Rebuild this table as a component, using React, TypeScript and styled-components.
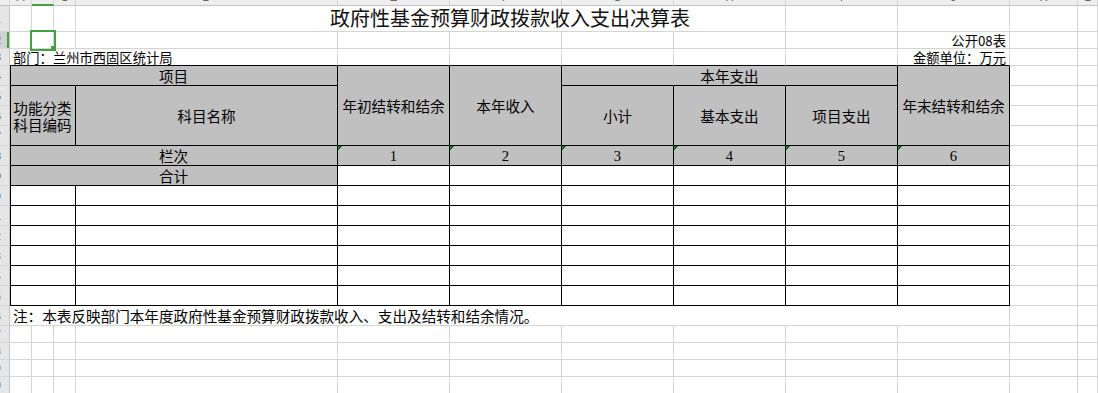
import React from 'react'
import styled, { createGlobalStyle, css } from 'styled-components'

const GRID = '#d4d4d4'
const INK = '#000'
const HEAD = '#c0c0c0'
const PICK = '#43a143'

const GlobalStyle = createGlobalStyle`
    html, body {
        margin: 0;
        padding: 0;
        background: #fff;
        overflow: hidden;
    }
`

type Place = { $c: number; $r: number; $cs?: number; $rs?: number }

const place = css<Place>`
    grid-column: ${p => p.$c} / span ${p => p.$cs ?? 1};
    grid-row: ${p => p.$r} / span ${p => p.$rs ?? 1};
    box-sizing: border-box;
    min-width: 0;
`

const Sheet = styled.div`
    display: grid;
    grid-template-columns: 10px 22px 22px 22px 262px repeat(6, 112px) 68px 1fr;
    grid-template-rows: 6px 26px 17px 17px repeat(13, 20px) repeat(4, 17px);
    width: 1098px;
    height: 393px;
    overflow: hidden;
    font-family: "Noto Sans CJK SC", "Noto Sans", sans-serif;
    color: #000;
`

// column letters sit mostly above the window edge, only their feet show
const ColHead = styled.div<Place & { $on?: boolean }>`
    ${place}
    display: flex;
    justify-content: center;
    align-items: flex-end;
    overflow: hidden;
    background: #eeeeee;
    border-right: 1px solid #d6d6d6;
    border-bottom: ${p => (p.$on ? `2px solid ${PICK}` : '1px solid #c4c4c4')};
    font-family: "Liberation Sans", sans-serif;
    font-size: 12px;
    line-height: 12px;
    color: #666;
`

const Letter = styled.span`
    display: block;
    transform: translateY(-2px);
`

const RowHead = styled.div<Place & { $on?: boolean }>`
    ${place}
    display: flex;
    justify-content: flex-end;
    align-items: center;
    overflow: hidden;
    padding-right: 8px;
    background: ${p => (p.$on ? '#d2d2d2' : '#e6e6e6')};
    border-right: 1px solid #c4c4c4;
    border-bottom: 1px solid #d6d6d6;
    box-shadow: ${p => (p.$on ? `inset -2px 0 0 ${PICK}` : 'none')};
    font-family: "Liberation Sans", sans-serif;
    font-size: 11px;
    color: #666;
    white-space: nowrap;
`

const GridCell = styled.div<Place & { $under?: boolean }>`
    ${place}
    border-right: 1px solid ${GRID};
    border-bottom: 1px solid ${p => (p.$under ? INK : GRID)};
`

const Picked = styled(GridCell)`
    position: relative;
    outline: 2px solid ${PICK};
    &::after {
        content: "";
        position: absolute;
        right: -3px;
        bottom: -3px;
        width: 5px;
        height: 5px;
        background: ${PICK};
    }
`

const Caption = styled(GridCell)<{ $end?: boolean }>`
    display: flex;
    align-items: flex-end;
    justify-content: ${p => (p.$end ? 'flex-end' : 'flex-start')};
    padding: 0 3px;
    font-size: 13.3px;
    line-height: 15px;
    white-space: nowrap;
`

const Note = styled(GridCell)`
    display: flex;
    align-items: center;
    padding: 0 3px;
    font-size: 14.6px;
    line-height: 17px;
    white-space: nowrap;
`

const TitleBand = styled.div<Place>`
    ${place}
    display: flex;
    justify-content: center;
    padding-bottom: 1px;
    pointer-events: none;
`

const TitleText = styled.span`
    display: flex;
    align-items: flex-end;
    padding: 0 2px 2px;
    background: #fff;
    font-size: 20px;
    line-height: 22px;
    color: #111;
    white-space: nowrap;
`

const TableCell = styled.div<Place & { $edge?: boolean }>`
    ${place}
    display: flex;
    align-items: center;
    justify-content: center;
    text-align: center;
    background: #fff;
    border-right: 1px solid ${INK};
    border-bottom: 1px solid ${INK};
    box-shadow: ${p => (p.$edge ? `inset 1px 0 0 ${INK}` : 'none')};
    font-size: 14.6px;
    line-height: 17px;
    white-space: nowrap;
`

const HeadCell = styled(TableCell)`
    background: ${HEAD};
`

const IndexCell = styled(TableCell)`
    background: linear-gradient(135deg, #117a11 3px, transparent 3px) ${HEAD};
    font-family: "Liberation Serif", serif;
    padding-top: 1px;
`

const letters = ['A', 'B', 'C', 'D', 'E', 'F', 'G', 'H', 'I', 'J', 'K', 'L']
const range = (from: number, to: number) => Array.from({ length: to - from + 1 }, (_, i) => from + i)

const heads = ['年初结转和结余', '本年收入']
const spend = ['小计', '基本支出', '项目支出']

export default function App() {
    return (
        <>
            <GlobalStyle />
            <Sheet>
                <ColHead $c={1} $r={1} />
                {letters.map((l, i) => (
                    <ColHead key={l} $c={i + 2} $r={1} $on={l === 'B'}>
                        <Letter>{l}</Letter>
                    </ColHead>
                ))}
                {range(1, 20).map(n => (
                    <RowHead key={n} $c={1} $r={n + 1} $on={n === 2}>{n}</RowHead>
                ))}

                {range(2, 13).map(c => <GridCell key={`t${c}`} $c={c} $r={2} />)}
                <TitleBand $c={2} $cs={10} $r={2}>
                    <TitleText>政府性基金预算财政拨款收入支出决算表</TitleText>
                </TitleBand>

                <GridCell $c={2} $r={3} />
                <Picked $c={3} $r={3} />
                {range(4, 10).map(c => <GridCell key={`a${c}`} $c={c} $r={3} />)}
                <Caption $c={11} $r={3} $end>公开08表</Caption>
                <GridCell $c={12} $r={3} />
                <GridCell $c={13} $r={3} />

                <Caption $c={2} $cs={4} $r={4} $under>部门：兰州市西固区统计局</Caption>
                {range(6, 10).map(c => <GridCell key={`b${c}`} $c={c} $r={4} $under />)}
                <Caption $c={11} $r={4} $end $under>金额单位：万元</Caption>
                <GridCell $c={12} $r={4} />
                <GridCell $c={13} $r={4} />

                <HeadCell $c={2} $cs={4} $r={5} $edge>项目</HeadCell>
                {heads.map((h, i) => (
                    <HeadCell key={h} $c={6 + i} $r={5} $rs={4}>{h}</HeadCell>
                ))}
                <HeadCell $c={8} $cs={3} $r={5}>本年支出</HeadCell>
                <HeadCell $c={11} $r={5} $rs={4}>年末结转和结余</HeadCell>
                <HeadCell $c={2} $cs={3} $r={6} $rs={3} $edge>功能分类<br />科目编码</HeadCell>
                <HeadCell $c={5} $r={6} $rs={3}>科目名称</HeadCell>
                {spend.map((s, i) => (
                    <HeadCell key={s} $c={8 + i} $r={6} $rs={3}>{s}</HeadCell>
                ))}

                <HeadCell $c={2} $cs={4} $r={9} $edge>栏次</HeadCell>
                {range(1, 6).map(n => (
                    <IndexCell key={`n${n}`} $c={5 + n} $r={9}>{n}</IndexCell>
                ))}

                <HeadCell $c={2} $cs={4} $r={10} $edge>合计</HeadCell>
                {range(6, 11).map(c => <TableCell key={`s${c}`} $c={c} $r={10} />)}

                {range(11, 16).map(r => (
                    <React.Fragment key={`row${r}`}>
                        <TableCell $c={2} $cs={3} $r={r} $edge />
                        {range(5, 11).map(c => <TableCell key={c} $c={c} $r={r} />)}
                    </React.Fragment>
                ))}

                {range(5, 21).map(r => (
                    <React.Fragment key={`side${r}`}>
                        <GridCell $c={12} $r={r} />
                        <GridCell $c={13} $r={r} />
                    </React.Fragment>
                ))}

                <Note $c={2} $cs={10} $r={17}>注：本表反映部门本年度政府性基金预算财政拨款收入、支出及结转和结余情况。</Note>

                {range(18, 21).map(r => (
                    <React.Fragment key={`low${r}`}>
                        {range(2, 11).map(c => <GridCell key={c} $c={c} $r={r} />)}
                    </React.Fragment>
                ))}
            </Sheet>
        </>
    )
}
